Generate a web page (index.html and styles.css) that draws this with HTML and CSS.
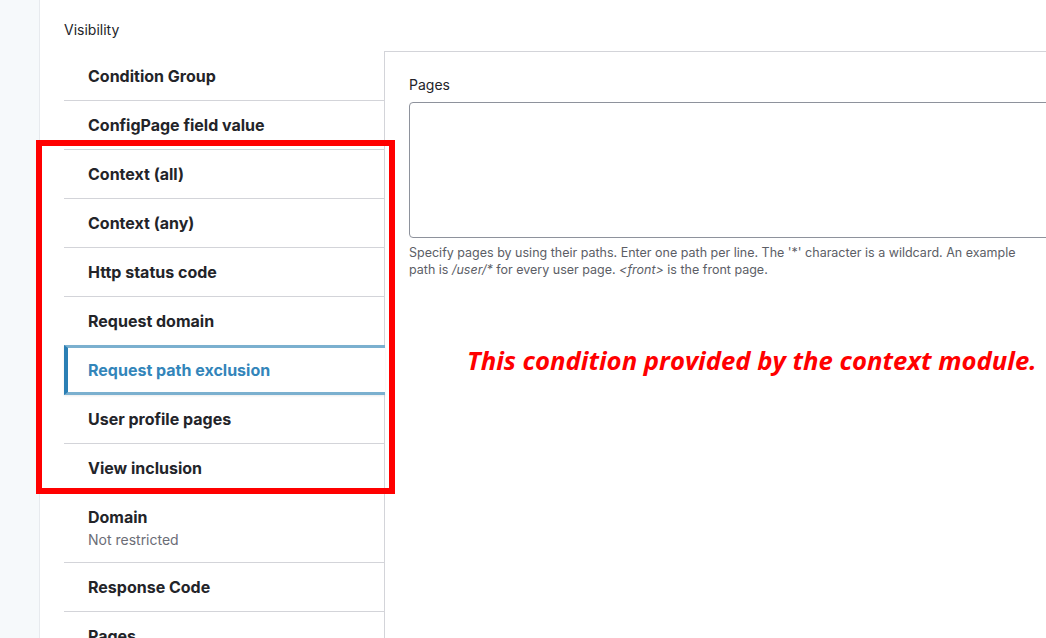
FILE: index.html
```html
<!DOCTYPE html>
<html lang="en">
<head>
<meta charset="utf-8">
<title>Visibility</title>
<link rel="stylesheet" href="styles.css">
</head>
<body>
<div class="page">
  <aside class="gutter"></aside>
  <main class="content">
    <div class="section-label">Visibility</div>
    <div class="vtabs">
      <ul class="vtabs-menu">
        <li class="vtab"><span class="vtab-title">Condition Group</span></li>
        <li class="vtab"><span class="vtab-title">ConfigPage field value</span></li>
        <li class="vtab"><span class="vtab-title">Context (all)</span></li>
        <li class="vtab"><span class="vtab-title">Context (any)</span></li>
        <li class="vtab"><span class="vtab-title">Http status code</span></li>
        <li class="vtab"><span class="vtab-title">Request domain</span></li>
        <li class="vtab is-active"><span class="vtab-title">Request path exclusion</span></li>
        <li class="vtab"><span class="vtab-title">User profile pages</span></li>
        <li class="vtab"><span class="vtab-title">View inclusion</span></li>
        <li class="vtab"><span class="vtab-title">Domain</span><span class="vtab-summary">Not restricted</span></li>
        <li class="vtab"><span class="vtab-title">Response Code</span></li>
        <li class="vtab"><span class="vtab-title">Pages</span></li>
      </ul>
      <section class="vtabs-pane">
        <label class="field-label" for="pages">Pages</label>
        <textarea id="pages" class="field-textarea"></textarea>
        <div class="field-desc">Specify pages by using their paths. Enter one path per line. The '*' character is a wildcard. An example path is <em>/user/*</em> for every user page. <em>&lt;front&gt;</em> is the front page.</div>
        <p class="note">This condition provided by the context module.</p>
      </section>
    </div>
    <div class="highlight-box"></div>
  </main>
</div>
</body>
</html>
```

FILE: styles.css
```css
html, body {
  margin: 0;
  padding: 0;
  height: 100%;
  overflow: hidden;
}
body {
  font-family: Inter, "Liberation Sans", sans-serif;
  color: #232429;
  background: #ffffff;
}
.page {
  display: flex;
  height: 638px;
  overflow: hidden;
}
.gutter {
  width: 39px;
  flex: 0 0 39px;
  background: #f6f9fb;
  border-right: 1px solid #e7eaee;
}
.content {
  position: relative;
  flex: 1;
  padding: 0 0 0 24px;
  min-width: 0;
}
.section-label {
  font-size: 14px;
  line-height: 20px;
  padding-top: 20px;
  height: 51px;
  box-sizing: border-box;
  color: #232429;
}
.vtabs {
  display: flex;
  align-items: flex-start;
}
.vtabs-menu {
  list-style: none;
  margin: 1px 0 0 0;
  padding: 0;
  width: 320px;
  flex: 0 0 320px;
  position: relative;
  z-index: 1;
}
.vtab {
  display: flex;
  flex-direction: column;
  padding: 12px 24px;
  border-bottom: 1px solid #d3d4d9;
  min-height: 24px;
}
.vtab-title {
  font-size: 16px;
  font-weight: 700;
  line-height: 24px;
  color: #232429;
}
.vtab-summary {
  font-size: 14px;
  line-height: 21px;
  color: #6b6d76;
}
.vtab.is-active {
  border-top: 3px solid #7bb0cf;
  border-bottom: 3px solid #7bb0cf;
  border-left: 4px solid #2b7fb4;
  margin-top: -1px;
  margin-right: -1px;
  padding: 10px 24px 10px 20px;
  background: #ffffff;
  box-shadow: 0 1px 2px rgba(0,0,0,0.08);
}
.vtab.is-active .vtab-title {
  color: #3385ba;
}
.vtabs-pane {
  flex: 1;
  min-width: 0;
  border-top: 1px solid #d3d4d9;
  border-left: 1px solid #d3d4d9;
  height: 587px;
  padding: 24px 0 0 24px;
  box-sizing: border-box;
}
.field-label {
  display: block;
  font-size: 14px;
  line-height: 18px;
  color: #232429;
  margin-bottom: 8px;
}
.field-textarea {
  display: block;
  width: calc(100% + 10px);
  height: 136px;
  box-sizing: border-box;
  border: 1px solid #8e929c;
  border-radius: 4px;
  resize: none;
  margin: 0;
  padding: 8px;
  font-family: inherit;
}
.field-desc {
  font-size: 12.5px;
  line-height: 17px;
  color: #5c5e66;
  margin-top: 6px;
  padding-right: 20px;
}
.note {
  margin: 68px 0 0 58px;
  font-family: "Open Sans", "DejaVu Sans", sans-serif;
  font-style: italic;
  font-weight: 700;
  font-size: 25.7px;
  line-height: 30px;
  color: #ff0000;
  white-space: nowrap;
}
.highlight-box {
  position: absolute;
  left: -4px;
  top: 140px;
  width: 359px;
  height: 354px;
  box-sizing: border-box;
  border: 6px solid #ff0000;
  pointer-events: none;
  z-index: 2;
}
```
